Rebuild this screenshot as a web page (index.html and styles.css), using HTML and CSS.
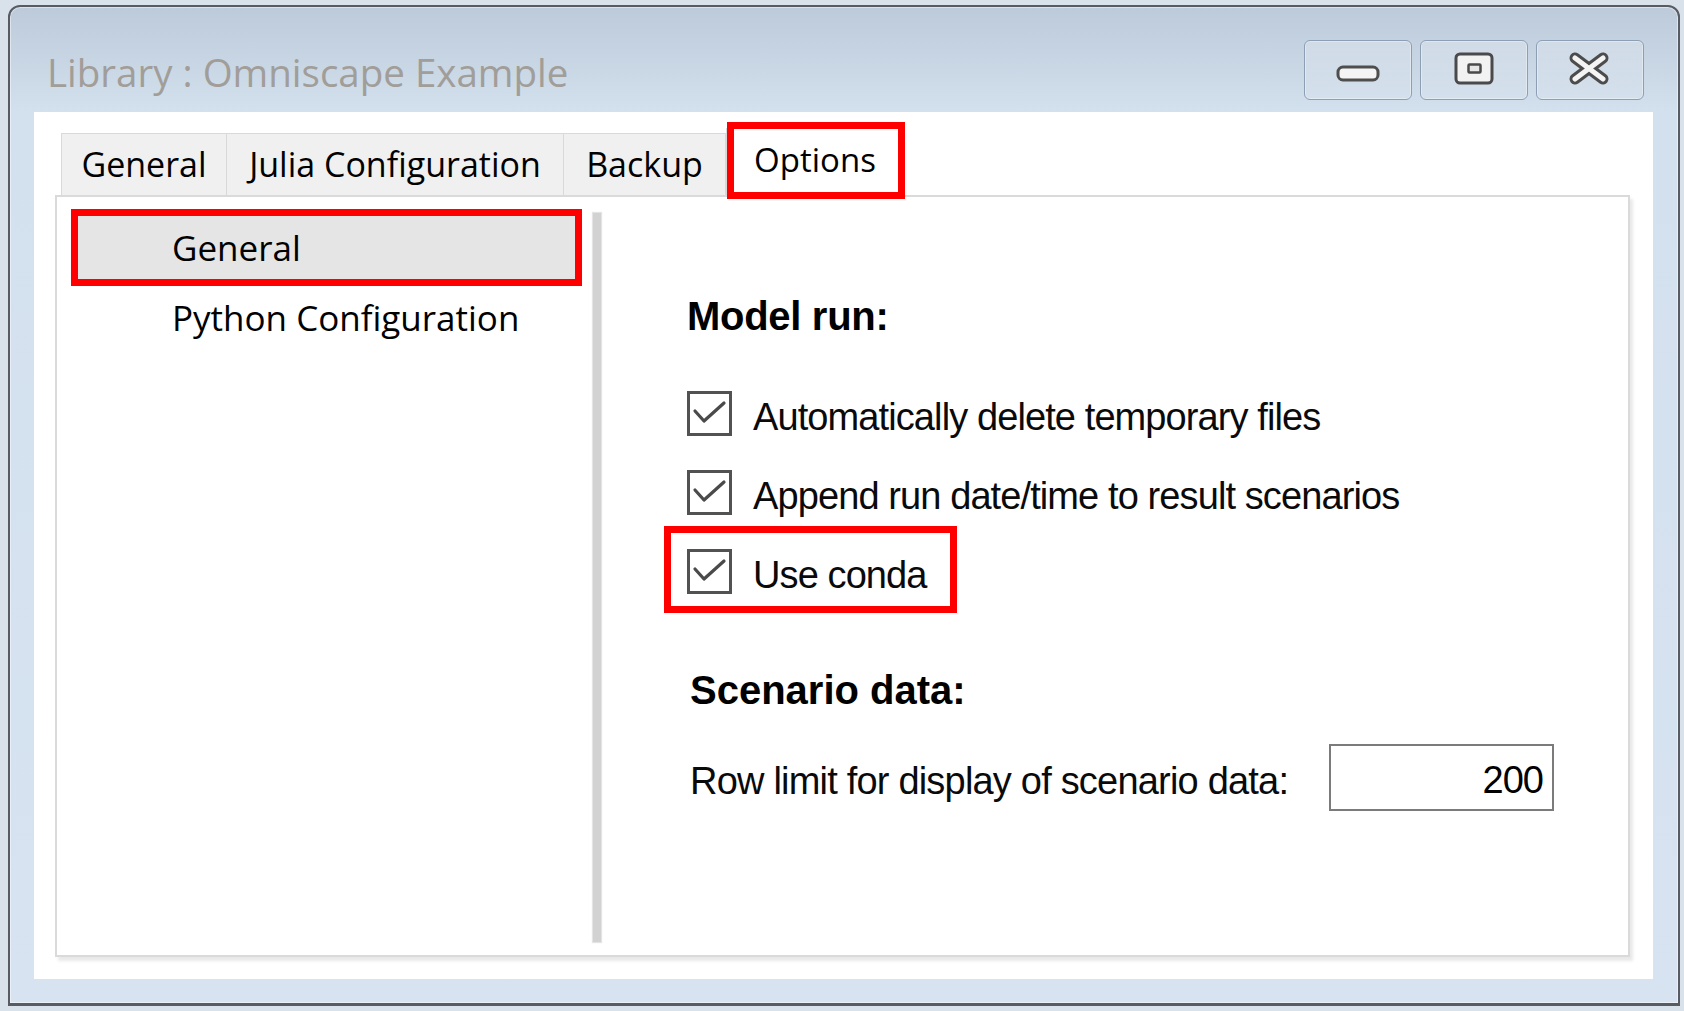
FILE: index.html
```html
<!DOCTYPE html>
<html>
<head>
<meta charset="utf-8">
<title>Library : Omniscape Example</title>
<link rel="stylesheet" href="styles.css">
</head>
<body>
<div class="window">
  <div class="titlebar">
    <div class="title">Library : Omniscape Example</div>
    <div class="caption-buttons">
      <div class="cbtn">
        <svg width="108" height="60" viewBox="0 0 108 60"><rect x="34" y="27" width="40" height="13" rx="5" fill="#f4f4f4" stroke="#4e4e4e" stroke-width="3"/></svg>
      </div>
      <div class="cbtn">
        <svg width="108" height="60" viewBox="0 0 108 60"><rect x="36" y="14" width="36" height="29" rx="4" fill="#f2f2f2" stroke="#4a4a4a" stroke-width="3"/><rect x="48.5" y="24.5" width="12" height="8" rx="1" fill="#e6e6e6" stroke="#4a4a4a" stroke-width="2.5"/></svg>
      </div>
      <div class="cbtn">
        <svg width="108" height="60" viewBox="0 0 108 60"><g stroke-linecap="round"><path d="M39 18 L67 39 M67 18 L39 39" stroke="#4c4c4c" stroke-width="11"/><path d="M39 18 L67 39 M67 18 L39 39" stroke="#f4f4f4" stroke-width="5"/></g></svg>
      </div>
    </div>
  </div>
  <div class="client">
    <div class="tabs">
      <div class="tab tab-general">General</div>
      <div class="tab tab-julia">Julia Configuration</div>
      <div class="tab tab-backup">Backup</div>
      <div class="tab tab-options active">Options</div>
    </div>
    <div class="panel">
      <div class="nav">
        <div class="nav-item selected">General</div>
        <div class="nav-item">Python Configuration</div>
      </div>
      <div class="splitter"></div>
      <div class="content">
        <div class="heading heading-model">Model run:</div>
        <div class="check-row row-first">
          <span class="checkbox"><svg width="45" height="45" viewBox="0 0 45 45"><path d="M8 20 L17 30 L37 12" fill="none" stroke="#4a4a4a" stroke-width="3.2" stroke-linejoin="round" stroke-linecap="round"/></svg></span>
          <span class="label">Automatically delete temporary files</span>
        </div>
        <div class="check-row">
          <span class="checkbox"><svg width="45" height="45" viewBox="0 0 45 45"><path d="M8 20 L17 30 L37 12" fill="none" stroke="#4a4a4a" stroke-width="3.2" stroke-linejoin="round" stroke-linecap="round"/></svg></span>
          <span class="label">Append run date/time to result scenarios</span>
        </div>
        <div class="check-row marked">
          <span class="checkbox"><svg width="45" height="45" viewBox="0 0 45 45"><path d="M8 20 L17 30 L37 12" fill="none" stroke="#4a4a4a" stroke-width="3.2" stroke-linejoin="round" stroke-linecap="round"/></svg></span>
          <span class="label">Use conda</span>
        </div>
        <div class="heading heading-scenario">Scenario data:</div>
        <div class="field-row">
          <span class="field-label">Row limit for display of scenario data:</span>
          <div class="number-input">200</div>
        </div>
      </div>
    </div>
  </div>
</div>
</body>
</html>
```

FILE: styles.css
```css
html, body {
  margin: 0;
  padding: 0;
}

body {
  width: 1684px;
  height: 1011px;
  background: #d9e1eb;
  overflow: hidden;
}

.window {
  margin: 5px 0 0 8px;
  width: 1672px;
  height: 1001px;
  box-sizing: border-box;
  border: 2px solid #585c62;
  border-bottom-width: 3px;
  border-radius: 12px 12px 0 0;
  background: linear-gradient(to bottom, #bccada 0px, #d3e0ed 105px, #d7e3f0 100%);
  box-shadow: inset 0 0 0 1px rgba(255, 255, 255, 0.45);
  display: flex;
  flex-direction: column;
}

.titlebar {
  height: 105px;
  display: flex;
  align-items: flex-start;
  justify-content: space-between;
  flex: none;
}

.title {
  margin: 40px 0 0 37px;
  font-family: "Open Sans", "Noto Sans", sans-serif;
  font-size: 38.5px;
  line-height: 50px;
  color: #a19d99;
  white-space: nowrap;
}

.caption-buttons {
  display: flex;
  gap: 8px;
  margin: 33px 34px 0 0;
}

.cbtn {
  width: 108px;
  height: 60px;
  box-sizing: border-box;
  border: 1px solid #8d9fb5;
  border-radius: 6px;
  background: linear-gradient(to bottom, rgba(255, 255, 255, 0.22), rgba(255, 255, 255, 0.08));
  box-shadow: inset 0 0 0 1px rgba(255, 255, 255, 0.35);
  display: flex;
  align-items: center;
  justify-content: center;
}

.cbtn svg {
  display: block;
  margin: -1px;
}

.client {
  margin: 0 25px 0 24px;
  height: 867px;
  background: #ffffff;
  box-sizing: border-box;
  padding: 16px 23px 22px 21px;
  display: flex;
  flex-direction: column;
}

.tabs {
  display: flex;
  align-items: flex-end;
  height: 67px;
  margin-left: 6px;
  position: relative;
  z-index: 2;
  flex: none;
}

.tab {
  height: 62px;
  box-sizing: border-box;
  border: 1px solid #d9d9d9;
  border-bottom: none;
  border-right: none;
  background: #f0f0f0;
  font-family: "Open Sans", "Noto Sans", sans-serif;
  font-size: 34px;
  line-height: 61px;
  color: #000;
  text-align: center;
  white-space: nowrap;
}

.tab-general { width: 165px; }
.tab-julia { width: 337px; }
.tab-backup { width: 163px; border-right: 1px solid #d9d9d9; }

.tab.active {
  width: 178px;
  height: 69px;
  margin-bottom: -2px;
  background: #ffffff;
  border: 1px solid #d9d9d9;
  border-bottom: none;
  line-height: 62px;
  font-size: 33px;
  position: relative;
}

.tab.active::after {
  content: "";
  position: absolute;
  left: 0;
  right: -2px;
  top: -7px;
  bottom: -2px;
  border: 7px solid #ff0000;
}

.panel {
  flex: 1;
  box-sizing: border-box;
  border: 2px solid #dadada;
  box-shadow: 3px 4px 3px rgba(0, 0, 0, 0.09);
  background: #ffffff;
  display: flex;
  position: relative;
  z-index: 1;
}

.nav {
  width: 536px;
  box-sizing: border-box;
  padding: 19px 0 0 21px;
  display: flex;
  flex-direction: column;
  gap: 7px;
  flex: none;
}

.nav-item {
  width: 497px;
  height: 63px;
  box-sizing: border-box;
  padding-left: 94px;
  font-family: "Open Sans", "Noto Sans", sans-serif;
  font-size: 35px;
  line-height: 63px;
  color: #000;
  white-space: nowrap;
}

.nav-item.selected {
  background: #e5e5e5;
  position: relative;
}

.nav-item.selected::after {
  content: "";
  position: absolute;
  inset: -7px;
  border: 7px solid #ff0000;
}

.splitter {
  width: 8px;
  flex: none;
  margin: 16px 0 13px 0;
  background: #d2d2d2;
  box-shadow: 0 0 1px 1px #e4e4e4;
}

.content {
  flex: 1;
  padding-left: 86px;
  display: flex;
  flex-direction: column;
  align-items: flex-start;
  font-family: "Liberation Sans", Arial, sans-serif;
  color: #0a0a0a;
}

.heading {
  font-weight: bold;
  font-size: 40px;
  line-height: 46px;
  letter-spacing: -0.3px;
  color: #000;
}

.heading-model { margin-top: 96px; }
.heading-scenario { margin-top: 73px; margin-left: 3px; letter-spacing: 0; }

.check-row {
  display: flex;
  align-items: center;
  height: 45px;
  margin-top: 34px;
  position: relative;
}

.check-row.row-first { margin-top: 52px; }

.checkbox {
  width: 45px;
  height: 45px;
  box-sizing: border-box;
  border: 3px solid #525252;
  background: #fff;
  display: flex;
  align-items: center;
  justify-content: center;
  flex: none;
}

.checkbox svg {
  display: block;
  margin: -3px;
}

.label {
  margin-left: 21px;
  padding-top: 8px;
  font-size: 38px;
  line-height: 45px;
  letter-spacing: -0.9px;
  white-space: nowrap;
}

.check-row.marked::after {
  content: "";
  position: absolute;
  left: -23px;
  top: -23px;
  bottom: -19px;
  right: -30px;
  border: 7px solid #ff0000;
}

.field-row {
  display: flex;
  align-items: flex-start;
  margin-top: 31px;
  margin-left: 3px;
}

.field-label {
  width: 639px;
  padding-top: 15px;
  font-size: 38px;
  line-height: 45px;
  letter-spacing: -0.8px;
  white-space: nowrap;
}

.number-input {
  width: 225px;
  height: 67px;
  box-sizing: border-box;
  border: 2px solid #7b7b7b;
  padding: 12px 9px 6px 0;
  font-size: 38px;
  line-height: 45px;
  letter-spacing: -1px;
  text-align: right;
  color: #000;
}
```
